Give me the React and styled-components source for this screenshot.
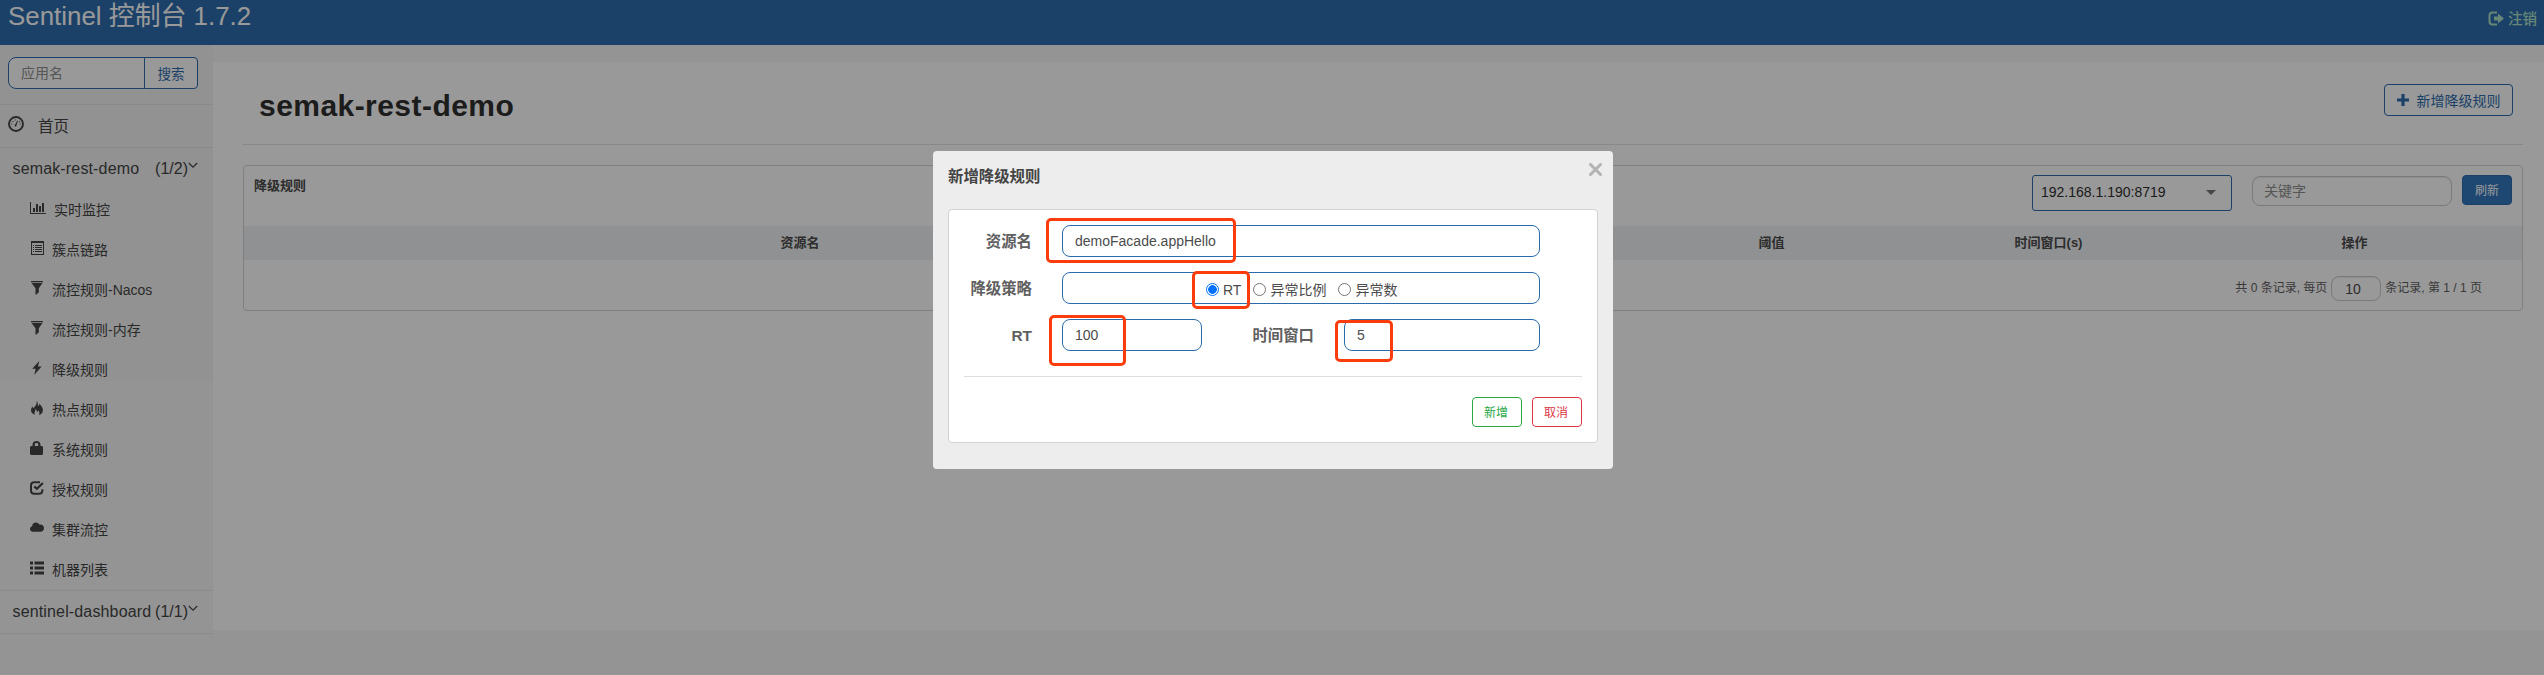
import React from 'react';
import styled, { createGlobalStyle } from 'styled-components';

const Global = createGlobalStyle`
  * { box-sizing: border-box; }
  html, body { margin: 0; padding: 0; }
  body, input, button {
    font-family: "Liberation Sans", "Noto Sans CJK SC", sans-serif;
    font-size: 14px;
    color: #4c4c4c;
  }
  body { background: #f7f7f7; overflow: hidden; }
`;

const Page = styled.div`height: 675px; display: flex; flex-direction: column; background: #f7f7f7;`;
const Header = styled.header`
  height: 45px; flex: none; display: flex; justify-content: space-between;
  background: #2d6dad; padding: 0 6px 0 8px;
`;
const Brand = styled.div`font-size: 25.9px; line-height: 33px; color: #fff; white-space: nowrap; height: 33px;`;
const Logout = styled.a`
  display: flex; align-items: center; gap: 4px; height: 37px; padding-right: 1px;
  font-size: 14.5px; line-height: 20px; color: #aee0c8; font-weight: 500;
`;
const Body = styled.div`display: flex; flex: 1;`;

const Sidebar = styled.aside`
  width: 213px; flex: none; font-size: 14px; color: #454545;
  background: linear-gradient(#f4f4f4 336px, #f7f7f7 336px);
`;
const SearchBox = styled.div`height: 60px; padding: 12px 15px 0 8px; display: flex; border-bottom: 1px solid #e7e7e7;`;
const SearchInput = styled.input`
  width: 137px; height: 32px; border: 1px solid #2d6dad; border-radius: 8px 0 0 8px; padding: 0 12px 1px; background: #fff; outline: none;
  &::placeholder { color: #8f8f8f; }
`;
const SearchButton = styled.button`
  width: 54px; height: 32px; margin-left: -1px; border: 1px solid #2d6dad; border-radius: 0 4px 4px 0;
  background: #fff; color: #2d6dad; font-size: 13.5px; padding: 0;
`;
const HomeRow = styled.div`
  height: 43px; display: flex; align-items: center; gap: 14px; padding: 0 0 2px 8px; border-bottom: 1px solid #e7e7e7; font-size: 15.5px;
  svg { margin-top: -2px; }
`;
const AppRow = styled.div`
  height: ${p => (p.$line ? 43 : 42)}px; display: flex; align-items: center; padding: 0 15px 0 12.5px; font-size: 16px;
  border-bottom: ${p => (p.$line ? '1px solid #e7e7e7' : '0')};
  svg { margin-top: -7px; }
`;
const AppName = styled.span`flex: 1; white-space: nowrap; letter-spacing: 0.15px;`;
const Menu = styled.div`border-bottom: 1px solid #e7e7e7;`;
const MenuItem = styled.div`
  height: 40px; display: flex; align-items: center; padding: 0 0 3px 30px; gap: 8px; font-size: 14px;
  svg { flex: none; margin-top: -1px; }
`;

const Main = styled.main`flex: 1; height: 568px; margin-top: 17px; background: #fff; padding: 0 21px 0 30px;`;
const TitleRow = styled.div`
  height: 83px; display: flex; justify-content: space-between; align-items: flex-start; padding: 22px 10px 0 16px; border-bottom: 1px solid #e3e3e3;
`;
const Title = styled.h1`margin: 0; font-size: 30px; line-height: 44px; font-weight: 700; color: #303030; letter-spacing: 0.45px;`;
const AddButton = styled.button`
  width: 129px; height: 32px; display: flex; align-items: center; justify-content: center; gap: 8px; padding: 0;
  background: #fff; border: 1px solid #2d6dad; border-radius: 4px; color: #2d6dad; font-size: 14px;
`;
const Panel = styled.section`margin-top: 20px; height: 146px; border: 1px solid #d6d6d6; border-radius: 4px;`;
const PanelTop = styled.div`height: 60px; display: flex; align-items: flex-start; padding: 9px 10px 0 10px;`;
const PanelTitle = styled.div`flex: 1; font-size: 13px; font-weight: 700; line-height: 22px;`;
const Select = styled.div`
  width: 200px; height: 36px; margin-right: 20px; border: 1px solid #2d6dad; border-radius: 3px; display: flex; align-items: center;
  justify-content: space-between; padding: 0 15px 2px 8px; font-size: 14px; color: #303030;
`;
const Keyword = styled.input`
  width: 200px; height: 30px; margin: 1px 10px 0 0; border: 1px solid #ccc; border-radius: 8px; padding: 0 11px 1px; outline: none;
  box-shadow: inset 0 1px 1px rgba(0,0,0,.075);
  &::placeholder { color: #8f8f8f; }
`;
const Refresh = styled.button`
  width: 50px; height: 30px; border: 1px solid #2d6dad; border-radius: 4px; background: #3278bd;
  color: #fff; font-size: 12px; padding: 0 0 1px;
`;
const TableHead = styled.div`
  height: 34px; padding-bottom: 3px; background: #f0f2f5; display: grid; align-items: center; text-align: center;
  grid-template-columns: 1112px 277px 277px 277px 335px;
  font-size: 13px; font-weight: 700;
`;
const Pager = styled.div`
  display: flex; justify-content: flex-end; align-items: center; gap: 4px; padding: 16px 40px 0 0; font-size: 12px; color: #606060; white-space: nowrap;
  span { padding-bottom: 4px; }
`;
const PageSize = styled.input`
  width: 50px; height: 25px; border: 1px solid #ccc; border-radius: 8px; padding: 0 13px; box-shadow: inset 0 1px 1px rgba(0,0,0,.075);
`;

const Backdrop = styled.div`
  position: absolute; inset: 0; background: rgba(0,0,0,.4); display: flex; justify-content: center; align-items: flex-start; padding: 151px 0 0 2px;
`;
const Dialog = styled.div`position: relative; width: 680px; height: 318px; border-radius: 4px; background: #ededed; padding: 0 15px;`;
const DialogHead = styled.div`height: 58px; display: flex; justify-content: space-between; padding: 12px 0 0;`;
const DialogTitle = styled.div`font-size: 15.4px; line-height: 27px; font-weight: 700; color: #444;`;
const Close = styled.button`border: 0; background: none; padding: 0; width: 13px; height: 13px; margin: 0 -4px 0 0; display: flex; svg { display: block; }`;
const FormPanel = styled.form`height: 234px; width: 650px; border: 1px solid #d3d3d3; border-radius: 4px; background: #fff; padding: 15px 15px 0;`;
const FormRow = styled.div`display: flex; height: 32px; margin-bottom: 15px; color: #606060;`;
const Label = styled.label`
  width: ${p => p.$w}px; padding-right: 30px; text-align: right; font-weight: 700; font-size: 15.4px; line-height: 34px;
`;
const Field = styled.input`
  width: ${p => p.$w}px; height: 32px; border: 1px solid #2a6cab; border-radius: 8px; padding: 0 12px 1px; outline: none; background: #fff;
`;
const RadioBox = styled.div`
  width: 478px; height: 32px; border: 1px solid #2a6cab; border-radius: 8px; display: flex; padding: 4px 0 0 143px; align-items: flex-start; color: #4c4c4c;
`;
const Option = styled.label`display: flex; align-items: flex-start; margin-right: 12px; line-height: 26px; gap: 4px;`;
const Dot = styled.span`
  width: 13px; height: 13px; margin-top: 6px; border-radius: 50%; border: 1px solid ${p => (p.$on ? '#0070ff' : '#767676')};
  background: ${p => (p.$on ? 'radial-gradient(circle, #0070ff 4px, #fff 4.6px)' : '#fff')};
`;
const Actions = styled.div`border-top: 1px solid #dedede; margin-top: 25px; padding-top: 20px; display: flex; justify-content: flex-end; gap: 10px;`;
const ActionButton = styled.button`
  width: 50px; height: 30px; border: 1px solid ${p => p.$c}; color: ${p => p.$c}; background: #fff; border-radius: 4px;
  font-size: 12px; padding: 0 2px 2px 0;
`;
const Mark = styled.div`
  position: absolute; left: ${p => p.$x}px; top: ${p => p.$y}px; width: ${p => p.$w}px; height: ${p => p.$h}px;
  border: 3px solid #fb3c0c; border-radius: 5px; pointer-events: none;
`;

const Svg = ({ w = 14, h = 14, children }) => (
  <svg width={w} height={h} viewBox={`0 0 ${w} ${h}`} fill="currentColor">{children}</svg>
);
const icons = {
  chart: <Svg w={16} h={14}><path d="M0 1h1v11h15v1H0zM3 7h2v4H3zM6 3h2v8H6zM9 5h2v6H9zM12 2h2v9h-2z" /></Svg>,
  list: <Svg><path fillRule="evenodd" d="M1 0h13v14H1zM2 2v11h11V2zM3 4h1v1H3zm2 0h7v1H5zM3 6h1v1H3zm2 0h7v1H5zM3 8h1v1H3zm2 0h7v1H5zM3 10h1v1H3zm2 0h7v1H5z" /></Svg>,
  filter: <Svg><path d="M1 0h12v1.2H1zM1.500 2h11L8.800 7.200v4.300L5.500 14V7.200z" /></Svg>,
  bolt: <Svg><path d="M9.300 0 2.200 7.700h3.500L4.200 14l7.400-8.500H8z" /></Svg>,
  fire: <Svg><path d="M6.500 0c2.400 2 .8 4 1.800 5.300.7-.4.9-1.500.7-2.500 2.800 1.800 4 4.400 3.900 6.600-.1 2.500-1.800 4-4.100 4.600 1-1.500.8-3.100-.6-4.800-.2 1-.5 1.600-1.300 1.900C7 9.300 6.100 8.300 5.600 7.500c.2 2.600-1.800 3.300-.7 6.300C2.500 13 1 11.500 1 9.200 1 7.600 1.800 6.500 2.600 5.300c0 1 .2 1.600.7 2C5.200 5 7.500 3.200 6.500 0z" /></Svg>,
  lock: <Svg><path fillRule="evenodd" d="M2.500 5V4c0-2.600 1.500-4 4-4s4 1.400 4 4v1H12l1 1v7l-1 1H1l-1-1V6l1-1zM4.800 5h3.400V3.800c0-1.100-.6-1.700-1.700-1.700s-1.700.6-1.700 1.700z" /></Svg>,
  check: <Svg><path d="M10 1.300H4.200C2 1.300 1 2.300 1 4.500v5C1 11.700 2 12.700 4.200 12.700h5c2.200 0 3.200-1 3.200-3.200V8.200" fill="none" stroke="currentColor" strokeWidth="2" /><path d="m4.300 5.400 2.600 2.400 6-5.800" fill="none" stroke="currentColor" strokeWidth="2.200" /></Svg>,
  cloud: <Svg><path d="M3 10.800C1.300 10.800 0 9.600 0 8c0-1.500 1-2.500 2.200-2.800C2.100 2.800 4 1.500 5.900 1.500c1.500 0 2.800.7 3.500 2 2.600-.5 4.600 1.300 4.600 3.600 0 2.200-1.600 3.700-3.500 3.700z" /></Svg>,
  rows: <Svg><path d="M0 .5h3v3H0zM4.500.5H14v3H4.500zM0 5.500h3v3H0zM4.500 5.500H14v3H4.500zM0 10.500h3v3H0zM4.500 10.500H14v3H4.500z" /></Svg>,
};
const Gauge = () => (
  <Svg w={16} h={16}>
    <circle cx="8" cy="8" r="7" fill="none" stroke="currentColor" strokeWidth="1.900" />
    <path d="M7.200 8.600 9.300 4.600l.7.300-1.500 4.200a1 1 0 1 1-1.300-.5zM3.200 7.500h1v1h-1zM4.400 4.900h1v1h-1zM6.800 3.600h1v1h-1zM11 5.200h1v1h-1zM11.800 7.500h1v1h-1z" />
  </Svg>
);
const Chevron = () => <Svg w={10} h={7}><path d="m.8 1 4.200 4.200L9.200 1" fill="none" stroke="currentColor" strokeWidth="1.200" /></Svg>;

const items = [
  ['chart', '实时监控'], ['list', '簇点链路'], ['filter', '流控规则-Nacos'], ['filter', '流控规则-内存'], ['bolt', '降级规则'],
  ['fire', '热点规则'], ['lock', '系统规则'], ['check', '授权规则'], ['cloud', '集群流控'], ['rows', '机器列表'],
];

export default function App() {
  return (
    <>
      <Global />
      <Page>
        <Header>
          <Brand>Sentinel 控制台 1.7.2</Brand>
          <Logout>
            <Svg w={16} h={15}><path d="M9 1.500H4.500c-2 0-3 1-3 3v6c0 2 1 3 3 3H9" fill="none" stroke="currentColor" strokeWidth="2" /><path d="M6 5.500h4V2.500l6 5-6 5v-3H6z" /></Svg>
            注销
          </Logout>
        </Header>
        <Body>
          <Sidebar>
            <SearchBox><SearchInput placeholder="应用名" /><SearchButton>搜索</SearchButton></SearchBox>
            <HomeRow><Gauge />首页</HomeRow>
            <AppRow><AppName>semak-rest-demo</AppName>(1/2)<Chevron /></AppRow>
            <Menu>
              {items.map(([icon, text]) => <MenuItem key={text}>{icons[icon]}{text}</MenuItem>)}
            </Menu>
            <AppRow $line><AppName>sentinel-dashboard</AppName>(1/1)<Chevron /></AppRow>
          </Sidebar>
          <Main>
            <TitleRow>
              <Title>semak-rest-demo</Title>
              <AddButton><Svg w={12} h={12}><path d="M4.400 0h3.200v4.400H12v3.200H7.600V12H4.400V7.600H0V4.400h4.400z" /></Svg>新增降级规则</AddButton>
            </TitleRow>
            <Panel>
              <PanelTop>
                <PanelTitle>降级规则</PanelTitle>
                <Select>192.168.1.190:8719<Svg w={10} h={5}><path d="M0 0h10L5 5z" fill="#777" /></Svg></Select>
                <Keyword placeholder="关键字" />
                <Refresh>刷新</Refresh>
              </PanelTop>
              <TableHead><span>资源名</span><span /><span>阈值</span><span>时间窗口(s)</span><span>操作</span></TableHead>
              <Pager><span>共 0 条记录, 每页</span><PageSize defaultValue="10" /><span>条记录, 第 1 / 1 页</span></Pager>
            </Panel>
          </Main>
        </Body>
      </Page>
      <Backdrop>
        <Dialog>
          <DialogHead>
            <DialogTitle>新增降级规则</DialogTitle>
            <Close aria-label="关闭"><Svg w={13} h={13}><path d="m1.500 1.500 10 10m0-10-10 10" stroke="#b3b3b3" strokeWidth="3" strokeLinecap="round" /></Svg></Close>
          </DialogHead>
          <FormPanel>
            <FormRow><Label $w={98}>资源名</Label><Field $w={478} defaultValue="demoFacade.appHello" /></FormRow>
            <FormRow>
              <Label $w={98}>降级策略</Label>
              <RadioBox>
                <Option><Dot $on />RT</Option>
                <Option><Dot />异常比例</Option>
                <Option><Dot />异常数</Option>
              </RadioBox>
            </FormRow>
            <FormRow>
              <Label $w={98}>RT</Label><Field $w={140} defaultValue="100" />
              <Label $w={142}>时间窗口</Label><Field $w={196} defaultValue="5" />
            </FormRow>
            <Actions><ActionButton type="button" $c="#28a745">新增</ActionButton><ActionButton type="button" $c="#dc3545">取消</ActionButton></Actions>
          </FormPanel>
          <Mark $x={113} $y={67} $w={190} $h={45} />
          <Mark $x={259} $y={120} $w={58} $h={38} />
          <Mark $x={116} $y={164} $w={77} $h={51} />
          <Mark $x={402} $y={169} $w={58} $h={42} />
        </Dialog>
      </Backdrop>
    </>
  );
}
